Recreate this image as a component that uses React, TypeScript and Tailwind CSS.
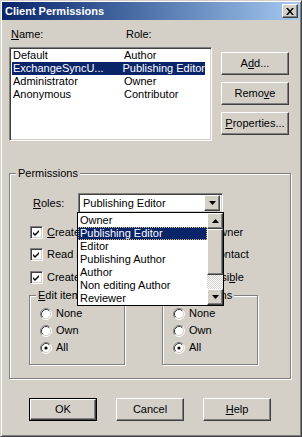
import React from 'react';

// Windows classic "Client Permissions" dialog

const raised =
  'border border-t-white border-l-white border-r-[#404040] border-b-[#404040] shadow-[inset_-1px_-1px_0_#808080] bg-[#d4d0c8]';
const sunken =
  'border border-t-[#808080] border-l-[#808080] border-r-white border-b-white shadow-[inset_1px_1px_0_#404040,inset_-1px_-1px_0_#d4d0c8]';

function Btn({ children, isDefault }: { children: React.ReactNode; isDefault?: boolean }) {
  if (isDefault) {
    return (
      <div className="w-[68px] h-[23px] border border-black flex">
        <div className={`flex-1 flex items-center justify-center ${raised}`}>{children}</div>
      </div>
    );
  }
  return <div className={`w-[68px] h-[23px] flex items-center justify-center ${raised}`}>{children}</div>;
}

function Arrow({ up }: { up?: boolean }) {
  return (
    <svg width="7" height="4" viewBox="0 0 7 4">
      <path d={up ? 'M3.5 0 L7 4 L0 4 Z' : 'M0 0 L7 0 L3.5 4 Z'} fill="#000" />
    </svg>
  );
}

function Check({ label }: { label: React.ReactNode }) {
  return (
    <div className="flex items-center h-[13px] gap-[4px]">
      <div className={`w-[13px] h-[13px] bg-white flex items-center justify-center ${sunken}`}>
        <svg width="9" height="9" viewBox="0 0 9 9">
          <path d="M1 4 L3 6 L7 2 L7 4 L3 8 L1 6 Z" fill="#000" />
        </svg>
      </div>
      <span className="whitespace-nowrap">{label}</span>
    </div>
  );
}

function Radio({ label, checked }: { label: string; checked?: boolean }) {
  return (
    <div className="flex items-center h-[13px] gap-[4px]">
      <svg width="12" height="12" viewBox="0 0 12 12">
        <circle cx="6" cy="6" r="5" fill="#fff" />
        <path d="M2.11 9.89 A5.5 5.5 0 0 1 9.89 2.11" stroke="#808080" fill="none" />
        <path d="M9.89 2.11 A5.5 5.5 0 0 1 2.11 9.89" stroke="#fff" fill="none" />
        <path d="M2.82 9.18 A4.5 4.5 0 0 1 9.18 2.82" stroke="#404040" fill="none" />
        <path d="M9.18 2.82 A4.5 4.5 0 0 1 2.82 9.18" stroke="#d4d0c8" fill="none" />
        {checked && <circle cx="6" cy="6" r="1.6" fill="#000" />}
      </svg>
      <span>{label}</span>
    </div>
  );
}

function Group({ label, className, children }: { label: React.ReactNode; className: string; children: React.ReactNode }) {
  return (
    <div className={`relative border border-[#808080] shadow-[1px_1px_0_#fff,inset_1px_1px_0_#fff] ${className}`}>
      <span className="absolute -top-[7px] left-[6px] px-[2px] bg-[#d4d0c8] leading-[13px] whitespace-nowrap">{label}</span>
      {children}
    </div>
  );
}

const users = [
  { name: 'Default', role: 'Author' },
  { name: 'ExchangeSyncU...', role: 'Publishing Editor', selected: true },
  { name: 'Administrator', role: 'Owner' },
  { name: 'Anonymous', role: 'Contributor' },
];

const roles = ['Owner', 'Publishing Editor', 'Editor', 'Publishing Author', 'Author', 'Non editing Author', 'Reviewer'];

export default function App() {
  return (
    <div className="relative w-[302px] h-[437px] overflow-hidden bg-[#d4d0c8] p-[1px] border border-t-[#d4d0c8] border-l-[#d4d0c8] border-r-[#404040] border-b-[#404040] shadow-[inset_1px_1px_0_#fff,inset_-1px_-1px_0_#808080] text-[11px] leading-[13px] text-black font-['Liberation_Sans',Arial,sans-serif]">
      {/* title bar */}
      <div className="h-[18px] flex items-center justify-between bg-gradient-to-r from-[#0a246a] to-[#a6caf0] pl-[3px] pr-[2px]">
        <span className="text-white font-bold">Client Permissions</span>
        <div className={`w-[16px] h-[14px] flex items-center justify-center ${raised}`}>
          <svg width="8" height="7" viewBox="0 0 8 7">
            <path d="M0 0 L2 0 L4 2.5 L6 0 L8 0 L5 3.5 L8 7 L6 7 L4 4.5 L2 7 L0 7 L3 3.5 Z" fill="#000" />
          </svg>
        </div>
      </div>

      <div className="px-[7px]">
        {/* column labels */}
        <div className="flex mt-[8px] pl-[2px]">
          <span className="w-[115px]"><span className="underline">N</span>ame:</span>
          <span>Role:</span>
        </div>

        {/* user list + buttons */}
        <div className="flex mt-[6px]">
          <div className={`w-[203px] h-[94px] bg-white p-[1px] ${sunken}`}>
            {users.map((u) => (
              <div
                key={u.name}
                className={`flex h-[13px] ml-[1px] w-[193px] whitespace-nowrap ${u.selected ? 'bg-[#0a246a] text-white' : ''}`}
              >
                <span className="w-[112px] pl-[1px]">{u.name}</span>
                <span>{u.role}</span>
              </div>
            ))}
          </div>
          <div className="flex flex-col ml-[9px] pt-[5px] gap-[7px]">
            <Btn>A<span className="underline">d</span>d...</Btn>
            <Btn>Remo<span className="underline">v</span>e</Btn>
            <Btn><span className="underline">P</span>roperties...</Btn>
          </div>
        </div>

        {/* permissions */}
        <Group label="Permissions" className="mt-[32px] w-[282px] pb-[13px]">
          <div className="flex items-center mt-[19px] pl-[23px]">
            <span className="w-[45px]"><span className="underline">R</span>oles:</span>
            <div className={`w-[145px] h-[20px] bg-white flex items-center p-[2px] ${sunken}`}>
              <span className="flex-1 pl-[2px]">Publishing Editor</span>
              <div className={`w-[16px] h-[16px] flex items-center justify-center ${raised}`}>
                <Arrow />
              </div>
            </div>
          </div>

          <div className="flex pl-[20px] mt-[13px]">
            <div className="w-[132px] flex flex-col">
              <Check label={<><span className="underline">C</span>reate items</>} />
              <div className="mt-[9px]"><Check label="Read items" /></div>
              <div className="mt-[10px]"><Check label="Create subfolders" /></div>
            </div>
            <div className="flex flex-col">
              <Check label="Folder owner" />
              <div className="mt-[9px]"><Check label="Folder contact" /></div>
              <div className="mt-[10px]"><Check label={<>Folder visi<span className="underline">b</span>le</>} /></div>
            </div>
          </div>

          <div className="flex mt-[11px] pl-[19px] gap-[37px]">
            <Group label={<><span className="underline">E</span>dit items</>} className="w-[96px] h-[70px]">
              <div className="flex flex-col gap-[4px] pt-[11px] pl-[10px]">
                <Radio label="None" />
                <Radio label="Own" />
                <Radio label="All" checked />
              </div>
            </Group>
            <Group label="Delete items" className="w-[96px] h-[70px]">
              <div className="flex flex-col gap-[4px] pt-[11px] pl-[10px]">
                <Radio label="None" />
                <Radio label="Own" />
                <Radio label="All" checked />
              </div>
            </Group>
          </div>
        </Group>

        {/* dialog buttons */}
        <div className="flex mt-[19px] pl-[20px] gap-[19px]">
          <Btn isDefault>OK</Btn>
          <Btn>Cancel</Btn>
          <Btn><span className="underline">H</span>elp</Btn>
        </div>
      </div>

      {/* open roles dropdown */}
      <div className="absolute left-[76px] top-[211px] w-[147px] h-[94px] bg-white border border-black flex">
        <div className="flex-1 pt-[1px]">
          {roles.map((r) => (
            <div
              key={r}
              className={`h-[13px] pl-[2px] whitespace-nowrap ${r === 'Publishing Editor' ? 'bg-[#0a246a] text-white outline-1 outline-dotted outline-[#d8c080] -outline-offset-1' : ''}`}
            >
              {r}
            </div>
          ))}
        </div>
        <div className="w-[16px] flex flex-col">
          <div className={`h-[16px] flex items-center justify-center ${raised}`}><Arrow up /></div>
          <div className={`h-[46px] ${raised}`} />
          <div className="flex-1 bg-[image:repeating-conic-gradient(#fff_0_25%,#d4d0c8_0_50%)] bg-[length:2px_2px]" />
          <div className={`h-[16px] flex items-center justify-center ${raised}`}><Arrow /></div>
        </div>
      </div>
    </div>
  );
}
